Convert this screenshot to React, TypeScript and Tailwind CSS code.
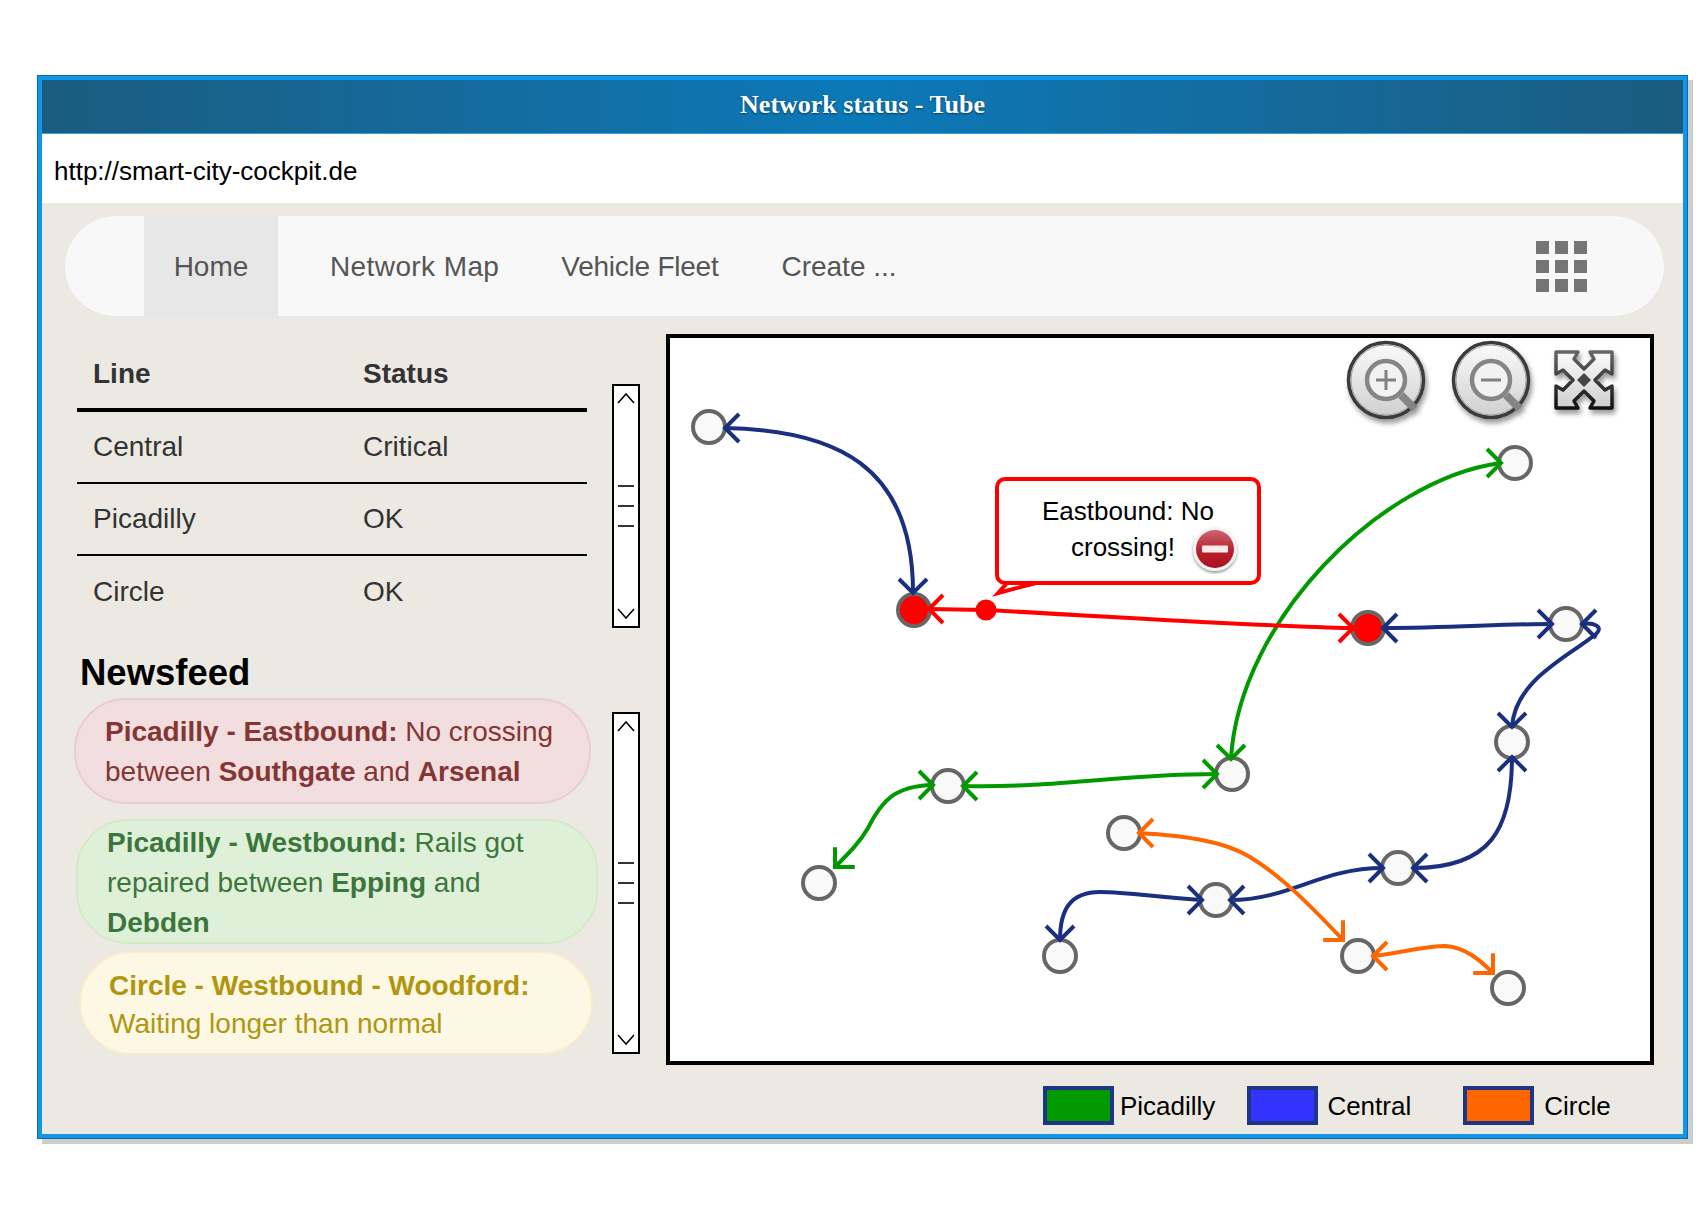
import React from "react";

const BLUE = "#1a2f80";
const GREEN = "#009900";
const RED = "#ff0000";
const ORANGE = "#ff6600";

// station positions in page coordinates, the svg viewBox is aligned to them
const nodes: [number, number, boolean?][] = [
  [709, 427],
  [914, 610, true],
  [1515, 463],
  [1368, 628, true],
  [1566, 624],
  [1512, 742],
  [1232, 774],
  [948, 786],
  [819, 883],
  [1124, 833],
  [1398, 868],
  [1216, 900],
  [1060, 956],
  [1358, 956],
  [1508, 988],
];

const edges: [string, string][] = [
  ["M725 428 C 835 430, 913 465, 913 592", BLUE],
  ["M1383 628 C 1450 628 1500 624 1551 624", BLUE],
  ["M1582 624 C 1594 622 1604 627 1596 634 C 1568 657 1515 680 1512 727", BLUE],
  ["M1512 757 C 1512 830 1490 868 1413 868", BLUE],
  ["M1383 868 C 1320 868 1290 900 1230 900", BLUE],
  ["M1202 900 C 1160 898 1130 892 1100 892 C 1070 892 1060 910 1060 940", BLUE],
  ["M1500 463 C 1380 480, 1240 620, 1231 758", GREEN],
  ["M963 786 C 1060 788, 1120 774, 1217 774", GREEN],
  ["M933 785 C 895 786 882 800 868 828 C 860 842 850 852 835 867", GREEN],
  ["M1139 833 C 1190 836 1225 842 1250 857 C 1280 875 1310 905 1343 940", ORANGE],
  ["M1373 956 C 1400 953 1425 946 1445 946 C 1465 947 1480 960 1493 973", ORANGE],
  ["M929 609 L986 610 C 1100 616 1250 626 1353 628", RED],
];

// x, y, angle, colour
const arrows: [number, number, number, string][] = [
  [725, 428, 180, BLUE],
  [913, 593, 90, BLUE],
  [1383, 628, 180, BLUE],
  [1552, 624, 0, BLUE],
  [1582, 624, 180, BLUE],
  [1512, 727, 90, BLUE],
  [1512, 757, -90, BLUE],
  [1413, 868, 180, BLUE],
  [1383, 868, 0, BLUE],
  [1230, 900, 180, BLUE],
  [1202, 900, 0, BLUE],
  [1060, 940, 90, BLUE],
  [1501, 463, 0, GREEN],
  [1231, 759, 90, GREEN],
  [963, 786, 180, GREEN],
  [1217, 774, 0, GREEN],
  [933, 785, 0, GREEN],
  [835, 867, 135, GREEN],
  [1139, 833, 180, ORANGE],
  [1343, 940, 45, ORANGE],
  [1373, 956, 180, ORANGE],
  [1493, 973, 45, ORANGE],
  [929, 609, 180, RED],
  [1353, 628, 0, RED],
];

const ZoomIcon = ({ cx, plus }: { cx: number; plus?: boolean }) => (
  <g transform={`translate(${cx} 380)`} filter="url(#soft)">
    <circle r="37.5" fill="url(#knob)" stroke="#3a3a3a" strokeWidth="3.5" />
    <circle r="35" fill="none" stroke="#a0a0a0" strokeWidth="1" />
    <line x1="15" y1="15" x2="29" y2="29" stroke="#858585" strokeWidth="8" />
    <circle r="19" fill="#f2f2f2" stroke="#858585" strokeWidth="4.5" />
    <line x1="-10" y1="0" x2="10" y2="0" stroke="#808080" strokeWidth="3" />
    {plus && <line x1="0" y1="-10" x2="0" y2="10" stroke="#808080" strokeWidth="3" />}
  </g>
);

const ExpandIcon = () => (
  <g transform="translate(1584 380)" filter="url(#soft)">
    <polygon
      points="-28,-28 -6,-28 -10,-21 0,-11 10,-21 6,-28 28,-28 28,-6 21,-10 11,0 21,10 28,6 28,28 6,28 10,21 0,11 -10,21 -6,28 -28,28 -28,6 -21,10 -11,0 -21,-10 -28,-6"
      fill="url(#knob)"
      stroke="url(#edge)"
      strokeWidth="3.5"
      strokeLinejoin="round"
    />
    <polygon points="0,-7 7,0 0,7 -7,0" fill="#444" />
  </g>
);

const Scrollbar = ({ className }: { className: string }) => (
  <div className={`flex w-[28px] flex-col items-center justify-between border-2 border-black bg-white py-[6px] ${className}`}>
    <svg width="18" height="12" viewBox="0 0 18 12">
      <polyline points="1,11 9,2 17,11" fill="none" stroke="#000" strokeWidth="1.5" />
    </svg>
    <div className="flex flex-col gap-[18px]">
      <div className="h-[2px] w-[16px] bg-[#333]" />
      <div className="h-[2px] w-[16px] bg-[#333]" />
      <div className="h-[2px] w-[16px] bg-[#333]" />
    </div>
    <svg width="18" height="12" viewBox="0 0 18 12">
      <polyline points="1,1 9,10 17,1" fill="none" stroke="#000" strokeWidth="1.5" />
    </svg>
  </div>
);

const StatusRow = ({ line, status, last }: { line: string; status: string; last?: boolean }) => (
  <div className={`grid h-[72px] grid-cols-[270px_1fr] items-center px-[16px] text-[#333] ${last ? "" : "border-b-2 border-black"}`}>
    <span>{line}</span>
    <span>{status}</span>
  </div>
);

const LegendItem = ({ label, swatch, className, gap }: { label: string; swatch: string; className: string; gap: string }) => (
  <div className={`flex items-center ${className}`}>
    <div className={`h-[39px] w-[71px] border-[4px] border-[#1f3585] ${swatch}`} />
    <span className={`${gap} pt-[2px] text-[26px] text-black`}>{label}</span>
  </div>
);

export default function App() {
  return (
    <div className="h-[1208px] w-[1708px] overflow-hidden bg-white pl-[38px] pt-[76px] font-['Liberation_Sans',sans-serif] text-[28px]">
      <div className="flex h-[1062px] w-[1649px] flex-col border-[4px] border-[#1496e6] bg-[#ece9e2] shadow-[0_0_0_1px_#0b6aa8,5px_5px_0_1px_#cdcdcd]">
        <div className="flex h-[54px] items-center justify-center border-b border-[#3aa0d8] bg-gradient-to-r from-[#1a5c80] via-[#0a79b8] to-[#1a5c80] pb-[4px] font-['Liberation_Serif',serif] text-[26px] font-bold text-white [text-shadow:0_1px_2px_#063a5c]">
          Network status - Tube
        </div>
        <div className="flex h-[69px] items-center bg-white pl-[12px] pt-[6px] text-[26px] text-black">
          http://smart-city-cockpit.de
        </div>

        <div className="ml-[23px] mr-[19px] mt-[13px] flex h-[102px] items-stretch rounded-[52px] border-b-2 border-[#e7e7e7] bg-[#f8f8f8] pl-[79px] text-[#555]">
          <div className="flex w-[134px] items-center justify-center bg-[#e7e7e7] pt-[2px]">Home</div>
          <div className="ml-[52px] flex items-center pt-[2px] tracking-[0.4px]">Network Map</div>
          <div className="ml-[62px] flex items-center pt-[2px] tracking-[-0.25px]">Vehicle Fleet</div>
          <div className="ml-[63px] flex items-center pt-[2px]">Create ...</div>
          <div className="ml-auto mr-[77px] grid grid-cols-[13px_13px_13px] gap-[6px] self-center">
            {Array.from({ length: 9 }).map((_, i) => (
              <div key={i} className="h-[13px] w-[13px] bg-[#757575]" />
            ))}
          </div>
        </div>

        <div className="mt-[16px] flex">
          <div className="w-[624px] pl-[32px]">
            <div className="flex">
              <div className="ml-[3px] mt-[6px] w-[510px]">
                <div className="grid h-[72px] grid-cols-[270px_1fr] items-center border-b-4 border-black px-[16px] font-bold text-[#333]">
                  <span>Line</span>
                  <span>Status</span>
                </div>
                <StatusRow line="Central" status="Critical" />
                <StatusRow line="Picadilly" status="OK" />
                <StatusRow line="Circle" status="OK" last />
              </div>
              <Scrollbar className="ml-[25px] mt-[50px] h-[244px]" />
            </div>

            <h2 className="ml-[6px] mt-[25px] h-[40px] text-[36.5px] font-bold leading-[40px] text-black">Newsfeed</h2>

            <div className="mt-[5px] flex">
              <div className="w-[538px]">
                <div className="h-[106px] w-[517px] rounded-[52px] border-2 border-[#ebccd1] bg-[#f2dede] pl-[29px] pt-[12px] leading-[40px] text-[#843534]">
                  <b>Picadilly - Eastbound:</b> No crossing
                  <br />
                  between <b>Southgate</b> and <b>Arsenal</b>
                </div>
                <div className="ml-[2px] mt-[15px] h-[125px] w-[522px] rounded-[52px] border-2 border-[#d6e9c6] bg-[#dff0d8] pl-[29px] pt-[2px] leading-[40px] text-[#3c763d]">
                  <b>Picadilly - Westbound:</b> Rails got
                  <br />
                  repaired between <b>Epping</b> and
                  <br />
                  <b>Debden</b>
                </div>
                <div className="ml-[5px] mt-[7px] h-[104px] w-[514px] rounded-[52px] border-2 border-[#faebcc] bg-[#fcf8e3] pl-[28px] pt-[14px] leading-[38px] text-[#b09610]">
                  <b>Circle - Westbound - Woodford:</b>
                  <br />
                  Waiting longer than normal
                </div>
              </div>
              <Scrollbar className="mt-[14px] h-[342px]" />
            </div>
          </div>

          <div className="relative h-[731px] w-[988px] border-4 border-black bg-white">
            <svg className="absolute inset-0" width="980" height="723" viewBox="670 338 980 723">
              <defs>
                <linearGradient id="knob" x1="0" y1="0" x2="0" y2="1">
                  <stop offset="0" stopColor="#fbfbfb" />
                  <stop offset="1" stopColor="#cfcfcf" />
                </linearGradient>
                <linearGradient id="edge" x1="0" y1="0" x2="0" y2="1">
                  <stop offset="0" stopColor="#666" />
                  <stop offset="1" stopColor="#111" />
                </linearGradient>
                <filter id="soft" x="-20%" y="-20%" width="140%" height="140%">
                  <feDropShadow dx="2" dy="4" stdDeviation="2.5" floodColor="#000" floodOpacity="0.4" />
                </filter>
              </defs>

              <ZoomIcon cx={1386} plus />
              <ZoomIcon cx={1491} />
              <ExpandIcon />

              {edges.map(([d, color], i) => (
                <path key={i} d={d} fill="none" stroke={color} strokeWidth="4" />
              ))}
              <circle cx="986" cy="610" r="10.5" fill={RED} />
              {nodes.map(([x, y, alert], i) => (
                <circle key={i} cx={x} cy={y} r="16" fill={alert ? RED : "#f9f9f9"} stroke="#666" strokeWidth="4" />
              ))}
              {arrows.map(([x, y, a, color], i) => (
                <path
                  key={i}
                  d="M-14 -14 L0 0 L-14 14"
                  transform={`translate(${x} ${y}) rotate(${a})`}
                  fill="none"
                  stroke={color}
                  strokeWidth="4"
                />
              ))}
              <path d="M1008 582 L998 593 L1040 582" fill="#fff" stroke={RED} strokeWidth="4" />
            </svg>

            <div className="absolute left-[325px] top-[139px] h-[108px] w-[266px] rounded-[10px] border-4 border-[#ff0000] bg-white pt-[12px] text-center text-[26px] leading-[36px] text-black">
              Eastbound: No
              <br />
              <span className="pr-[10px]">crossing!</span>
              <svg className="absolute left-[192px] top-[45px]" width="48" height="48" viewBox="0 0 48 48">
                <defs>
                  <linearGradient id="stop" x1="0" y1="0" x2="0" y2="1">
                    <stop offset="0" stopColor="#cc6672" />
                    <stop offset="0.55" stopColor="#b8202f" />
                    <stop offset="1" stopColor="#ae0f1e" />
                  </linearGradient>
                  <filter id="stopShadow" x="-20%" y="-20%" width="140%" height="140%">
                    <feDropShadow dx="0" dy="2" stdDeviation="1.5" floodColor="#000" floodOpacity="0.4" />
                  </filter>
                </defs>
                <circle cx="24" cy="23" r="22" fill="#f4f4f4" filter="url(#stopShadow)" />
                <circle cx="24" cy="23" r="19" fill="url(#stop)" />
                <rect x="11" y="19.5" width="26" height="7" rx="1" fill="#fbeaea" />
              </svg>
            </div>
          </div>
        </div>

        <div className="mt-[20px] flex">
          <LegendItem label="Picadilly" swatch="bg-[#009900]" className="ml-[1001px]" gap="ml-[6px]" />
          <LegendItem label="Central" swatch="bg-[#3333ff]" className="ml-[32px]" gap="ml-[9px]" />
          <LegendItem label="Circle" swatch="bg-[#ff6600]" className="ml-[52px]" gap="ml-[10px]" />
        </div>
      </div>
    </div>
  );
}
